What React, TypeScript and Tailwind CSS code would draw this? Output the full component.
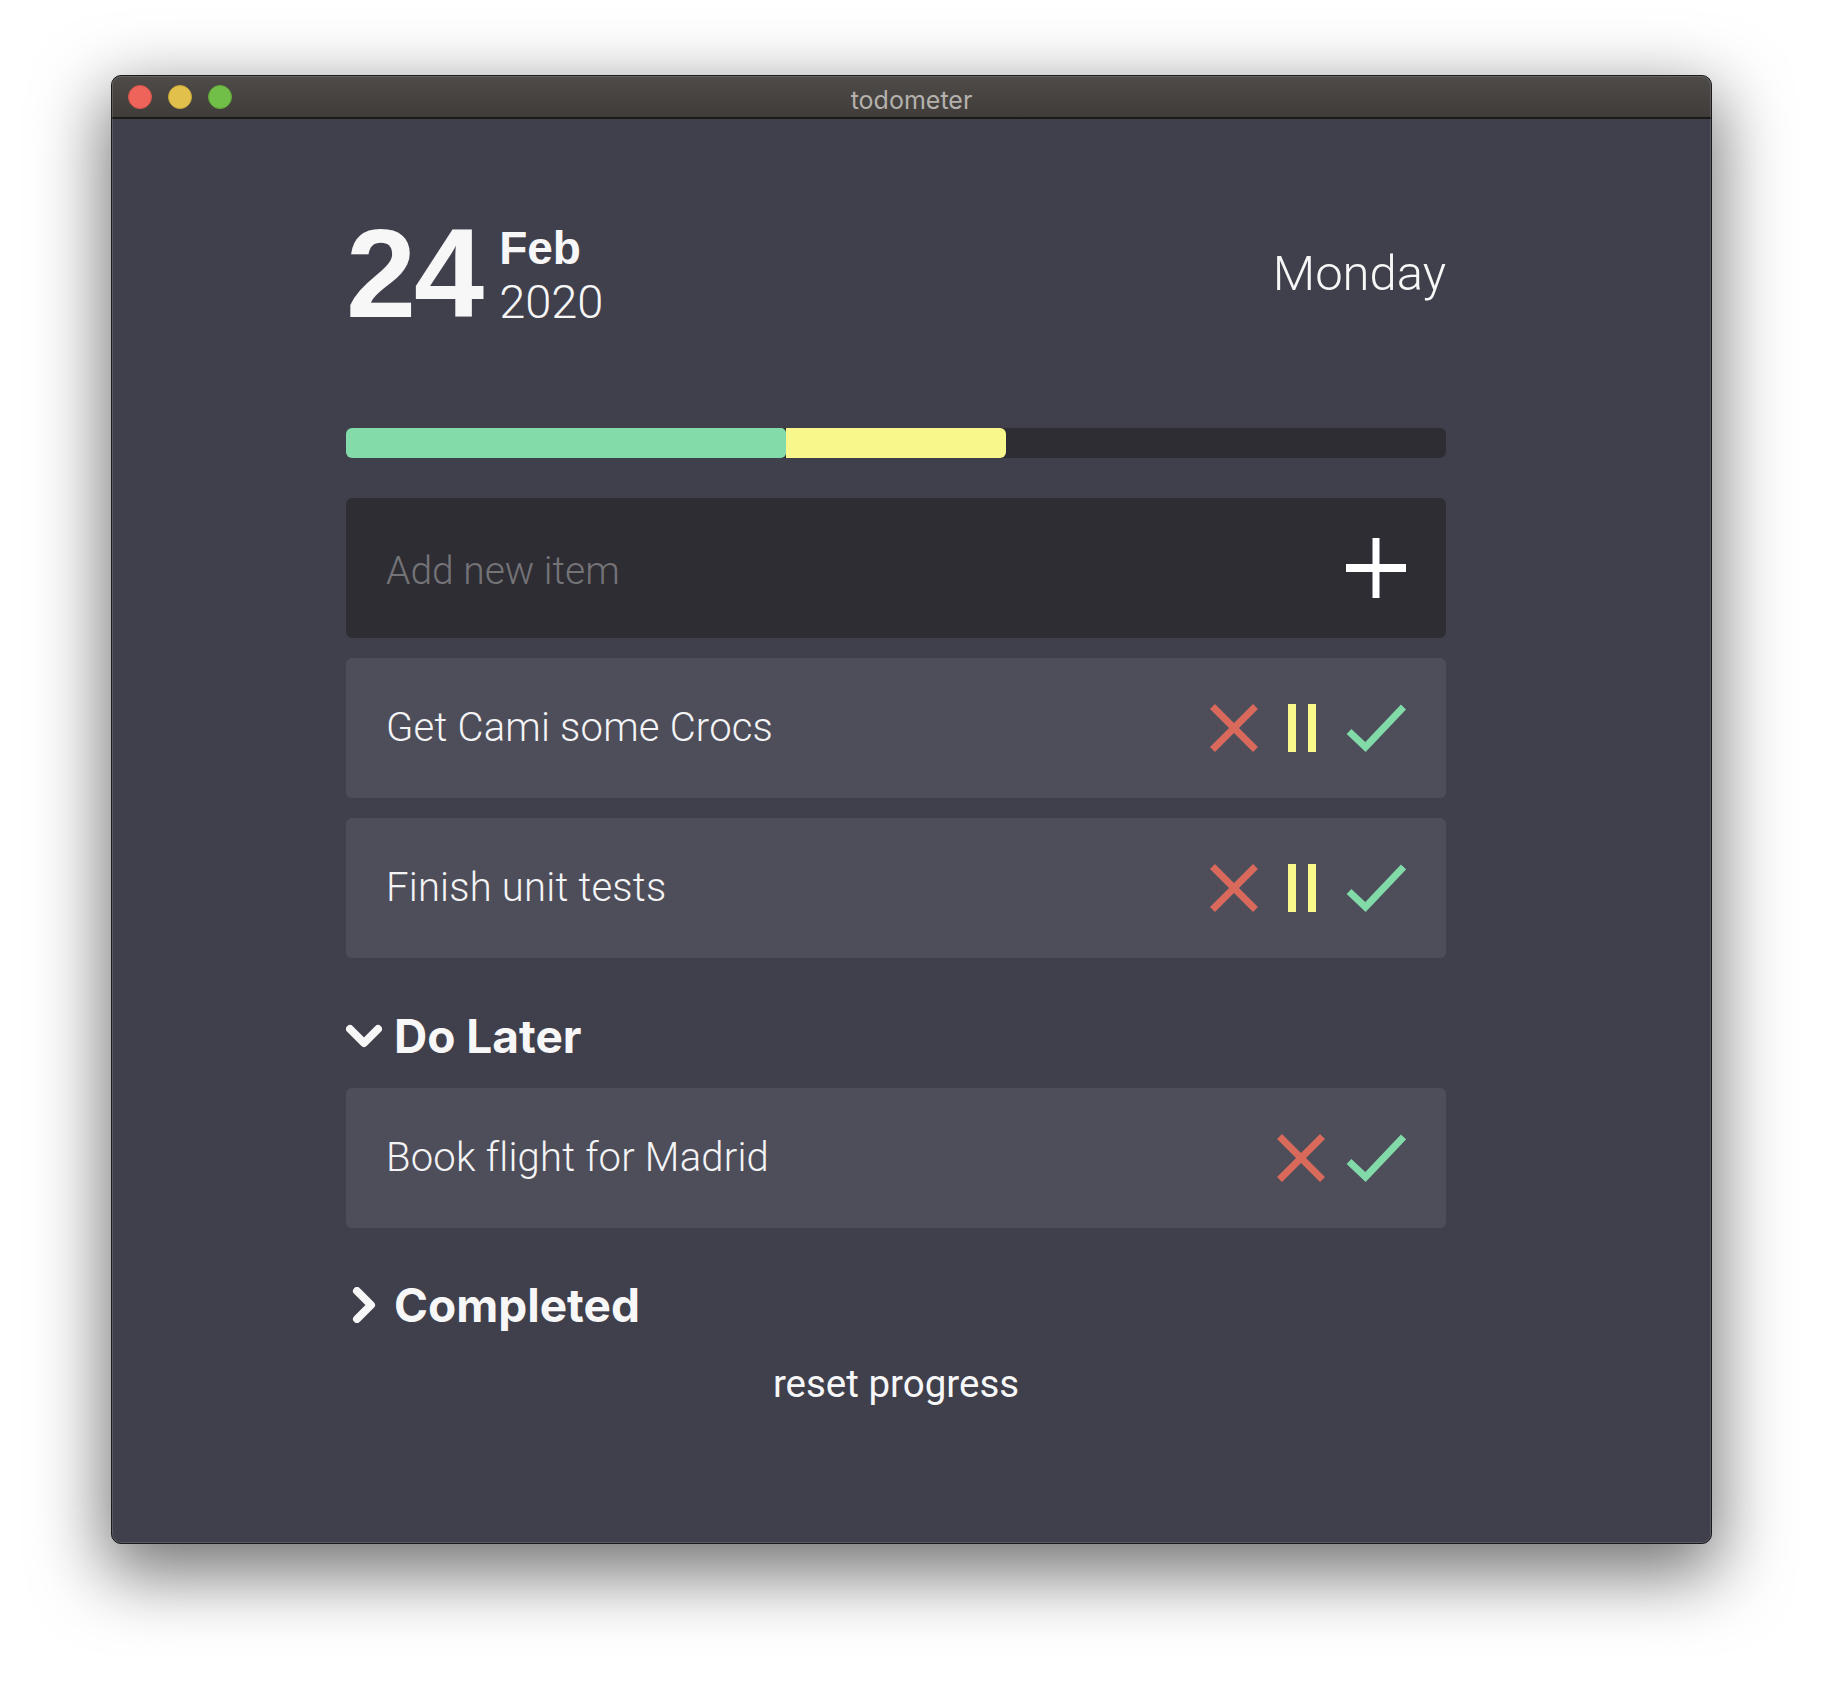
import React from 'react';

type Todo = { text: string; pausable: boolean };

const active: Todo[] = [
  { text: 'Get Cami some Crocs', pausable: true },
  { text: 'Finish unit tests', pausable: true },
];

const later: Todo[] = [{ text: 'Book flight for Madrid', pausable: false }];

const XIcon = () => (
  <svg width="48" height="48" viewBox="0 0 48 48" fill="none">
    <path d="M2.5 2.5L45.5 45.5M45.5 2.5L2.5 45.5" stroke="#d9695b" strokeWidth="7" />
  </svg>
);

const PauseIcon = () => (
  <svg width="46" height="48" viewBox="0 0 46 48">
    <rect x="9" y="0" width="8" height="48" fill="#f8f88b" />
    <rect x="29" y="0" width="8" height="48" fill="#f8f88b" />
  </svg>
);

const CheckIcon = () => (
  <svg width="60" height="48" viewBox="0 0 60 48" fill="none">
    <path d="M3 27.5L19.5 43L57.5 3" stroke="#82daa9" strokeWidth="7" />
  </svg>
);

const Chevron = ({ open }: { open: boolean }) => (
  <svg
    width="36"
    height="36"
    viewBox="0 0 36 36"
    fill="none"
    className={open ? '' : '-rotate-90'}
  >
    <path
      d="M4 11L18 25L32 11"
      stroke="#f7f7f8"
      strokeWidth="8"
      strokeLinecap="round"
      strokeLinejoin="round"
    />
  </svg>
);

const TodoRow = ({ item }: { item: Todo }) => (
  <div className="flex h-[140px] items-center justify-between rounded-[6px] bg-[#4e4e5a] px-[40px]">
    <span className="font-['Roboto',sans-serif] text-[40px] font-light leading-none tracking-[0.2px] text-[#f4f4f6]">
      {item.text}
    </span>
    <div className="flex items-center gap-[21px]">
      <XIcon />
      {item.pausable && <PauseIcon />}
      <CheckIcon />
    </div>
  </div>
);

const Section = ({ title, open }: { title: string; open: boolean }) => (
  <div className="flex items-center gap-[12px]">
    <Chevron open={open} />
    <h2 className="font-['Inter',sans-serif] text-[46px] font-bold leading-none text-[#f7f7f8]">
      {title}
    </h2>
  </div>
);

export default function App() {
  return (
    <div className="h-[1692px] w-[1824px] bg-white pl-[111px] pt-[75px]">
      <div className="relative flex h-[1469px] w-[1601px] flex-col overflow-hidden rounded-[10px] border border-[#1a1a1c] bg-[#40404c] shadow-[0_24px_70px_6px_rgba(0,0,0,0.55)]">
        {/* title bar */}
        <div className="relative flex h-[43px] shrink-0 items-center border-b-2 border-[#1b1a19] bg-gradient-to-b from-[#4f4b48] to-[#3f3c3a]">
          <div className="ml-[16px] flex items-center gap-[16px]">
            <span className="h-[24px] w-[24px] rounded-full border border-[#d5534a] bg-[#ee645a]" />
            <span className="h-[24px] w-[24px] rounded-full border border-[#c9a83c] bg-[#e1c04b]" />
            <span className="h-[24px] w-[24px] rounded-full border border-[#5fa83a] bg-[#71be48]" />
          </div>
          <span className="absolute left-1/2 top-[12px] -translate-x-1/2 font-['Inter',sans-serif] text-[25px] leading-none text-[#b4b1ad]">
            todometer
          </span>
        </div>

        {/* content */}
        <div className="ml-[234px] flex w-[1100px] flex-col pt-[92px]">
          <div className="flex items-start justify-between">
            <div className="flex items-start">
              <span className="font-['Liberation_Sans',Arial,sans-serif] text-[126px] font-bold leading-none tracking-[-2px] text-[#f7f7f8]">
                24
              </span>
              <div className="ml-[17px] mt-[14px] flex flex-col">
                <span className="font-['Liberation_Sans',Arial,sans-serif] text-[46px] font-bold leading-none text-[#f7f7f8]">
                  Feb
                </span>
                <span className="mt-[7px] font-['Roboto',sans-serif] text-[47px] font-light leading-none text-[#f7f7f8]">
                  2020
                </span>
              </div>
            </div>
            <span className="mt-[38px] font-['Roboto',sans-serif] text-[49px] font-light leading-none text-[#f7f7f8]">
              Monday
            </span>
          </div>

          {/* progress */}
          <div className="mt-[91px] flex h-[30px] overflow-hidden rounded-[6px] bg-[#2e2d34]">
            <div className="h-full w-[40%] rounded-r-[5px] bg-[#84dbaa]" />
            <div className="h-full w-[20%] rounded-r-[6px] bg-[#f7f78b]" />
          </div>

          {/* add item */}
          <div className="mt-[40px] flex h-[140px] items-center justify-between rounded-[6px] bg-[#2e2d34] px-[40px]">
            <input
              className="mt-[7px] flex-1 bg-transparent font-['Roboto',sans-serif] text-[39px] font-light text-[#f4f4f6] outline-none placeholder:text-[#747377]"
              placeholder="Add new item"
            />
            <svg width="60" height="60" viewBox="0 0 60 60">
              <rect x="26.5" y="0" width="7" height="60" fill="#ffffff" />
              <rect x="0" y="26" width="60" height="8" fill="#ffffff" />
            </svg>
          </div>

          <div className="mt-[20px] flex flex-col gap-[20px]">
            {active.map((t) => (
              <TodoRow key={t.text} item={t} />
            ))}
          </div>

          <div className="mt-[55px]">
            <Section title="Do Later" open />
          </div>
          <div className="mt-[29px] flex flex-col gap-[20px]">
            {later.map((t) => (
              <TodoRow key={t.text} item={t} />
            ))}
          </div>

          <div className="mt-[54px]">
            <Section title="Completed" open={false} />
          </div>

          <button className="mt-[37px] self-center font-['Roboto',sans-serif] text-[38.5px] leading-none text-[#f7f7f8]">
            reset progress
          </button>
        </div>

        <div className="pointer-events-none absolute inset-0 rounded-[9px] shadow-[inset_0_0_0_1px_rgba(255,255,255,0.14)]" />
      </div>
    </div>
  );
}
